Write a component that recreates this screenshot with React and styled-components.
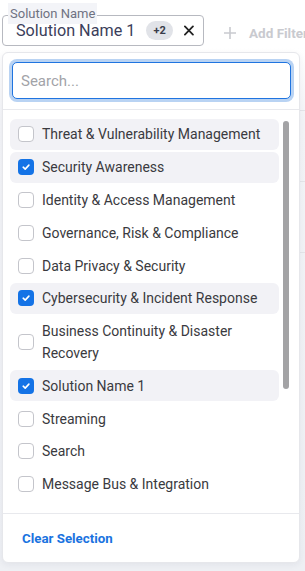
import React from "react";
import styled, { createGlobalStyle } from "styled-components";

const Global = createGlobalStyle`
  html, body { margin: 0; padding: 0; }
  body {
    background: #ffffff;
    font-family: Roboto, "Noto Sans", sans-serif;
    -webkit-font-smoothing: antialiased;
  }
`;

const Page = styled.div`
  position: relative;
  width: 305px;
  height: 571px;
  overflow: hidden;
  background: linear-gradient(180deg, #ffffff 0px, #ffffff 48px, #f3f4f7 120px, #eef0f4 571px);
`;

const FilterBar = styled.div`
  display: flex;
  align-items: center;
  gap: 20px;
  padding: 15px 0 0 2px;
  height: 31px;
`;

const Field = styled.div`
  position: relative;
  flex: none;
  box-sizing: border-box;
  width: 202px;
  height: 31px;
  border: 1px solid #b7b9c0;
  border-radius: 4px;
  background: #ffffff;
  display: flex;
  align-items: center;
  gap: 11px;
  padding: 0 9px 0 13px;
`;

const Legend = styled.span`
  position: absolute;
  left: 5px;
  top: -13px;
  padding: 0 2px;
  background: #f3f4f8;
  color: #6f7282;
  font-size: 13px;
  line-height: 21px;
`;

const FieldValue = styled.span`
  color: #3b3e5b;
  font-size: 16.2px;
  white-space: nowrap;
`;

const Badge = styled.span`
  display: inline-flex;
  align-items: center;
  justify-content: center;
  width: 30px;
  height: 19px;
  border-radius: 10px;
  background: #e1e3e8;
  color: #3a3d4a;
  font-size: 11px;
  font-weight: 700;
`;

const ClearX = styled.svg`
  width: 11px;
  height: 11px;
  margin-left: auto;
`;

const AddFilter = styled.div`
  display: flex;
  align-items: center;
  gap: 13px;
  color: #c9cacf;
  font-size: 13.5px;
  font-weight: 700;
  white-space: nowrap;
  padding-top: 4px;
`;

const Backdrop = styled.div`
  position: absolute;
  left: 300px;
  top: 110px;
  width: 10px;
  display: flex;
  flex-direction: column;
`;

const BgRow = styled.div`
  height: 70px;
  border-top: 1px solid #e4e5e9;
`;

const Dropdown = styled.div`
  position: absolute;
  left: 2px;
  top: 52px;
  width: 298px;
  height: 511px;
  box-sizing: border-box;
  background: #ffffff;
  border: 1px solid #e6e7eb;
  border-radius: 6px;
  box-shadow: 0 2px 6px rgba(30, 35, 60, 0.06);
  display: flex;
  flex-direction: column;
`;

const SearchWrap = styled.div`
  padding: 9px 8px 10px 9px;
  border-bottom: 1px solid #e8e9ed;
`;

const SearchInput = styled.input`
  box-sizing: border-box;
  width: 279px;
  height: 37px;
  border: 1.5px solid #1f74e0;
  border-radius: 5px;
  box-shadow: 0 0 0 3px #b9d3f3;
  padding: 0 8px;
  font-family: Roboto, "Noto Sans", sans-serif;
  font-size: 15px;
  color: #333;
  outline: none;
  caret-color: #222;
  &::placeholder { color: #a2a3a8; }
`;

const ListArea = styled.div`
  position: relative;
  flex: 1;
  min-height: 0;
  overflow: hidden;
  padding: 9px 0 0 7px;
  display: flex;
  flex-direction: column;
  gap: 2px;
`;

const Row = styled.label`
  flex: none;
  box-sizing: border-box;
  width: 269px;
  display: flex;
  align-items: center;
  gap: 8px;
  padding: 4.4px 8px;
  border-radius: 6px;
  background: ${(p) => (p.$hl ? "#f2f2f6" : "transparent")};
`;

const Box = styled.span`
  flex: none;
  box-sizing: border-box;
  width: 16px;
  height: 16px;
  border-radius: 4px;
  border: ${(p) => (p.$on ? "none" : "1px solid #c4c5cb")};
  background: ${(p) => (p.$on ? "#1473e6" : "#ffffff")};
  display: flex;
  align-items: center;
  justify-content: center;
`;

const ItemText = styled.span`
  color: #3a3a40;
  font-size: 14px;
  line-height: 22px;
`;

const Thumb = styled.div`
  position: absolute;
  left: 280px;
  top: 11px;
  width: 6px;
  height: 268px;
  border-radius: 3px;
  background: #a3a3a5;
`;

const Footer = styled.div`
  flex: none;
  border-top: 1px solid #e8e9ed;
  height: 48px;
  display: flex;
  align-items: center;
  padding-left: 19px;
`;

const ClearBtn = styled.span`
  color: #1a73e0;
  font-size: 13.3px;
  font-weight: 700;
`;

const items = [
  ["Threat & Vulnerability Management", false, true],
  ["Security Awareness", true, true],
  ["Identity & Access Management", false, false],
  ["Governance, Risk & Compliance", false, false],
  ["Data Privacy & Security", false, false],
  ["Cybersecurity & Incident Response", true, true],
  ["Business Continuity & Disaster Recovery", false, false],
  ["Solution Name 1", true, true],
  ["Streaming", false, false],
  ["Search", false, false],
  ["Message Bus & Integration", false, false],
];

const Check = () => (
  <svg width="10" height="10" viewBox="0 0 10 10">
    <path d="M2.2 5.2 L4.2 7.1 L7.9 3.1" fill="none" stroke="#fff" strokeWidth="1.6" strokeLinecap="round" strokeLinejoin="round" />
  </svg>
);

export default function App() {
  return (
    <Page>
      <Global />
      <FilterBar>
        <Field>
          <Legend>Solution Name</Legend>
          <FieldValue>Solution Name 1</FieldValue>
          <Badge>+2</Badge>
          <ClearX viewBox="0 0 11 11">
            <path d="M1 1 L10 10 M10 1 L1 10" stroke="#222" strokeWidth="2" strokeLinecap="round" />
          </ClearX>
        </Field>
        <AddFilter>
          <svg width="12" height="12" viewBox="0 0 12 12">
            <path d="M6 0 V12 M0 6 H12" stroke="#c9cacf" strokeWidth="1.6" />
          </svg>
          Add Filter
        </AddFilter>
      </FilterBar>
      <Backdrop>
        <BgRow />
        <BgRow />
        <BgRow />
      </Backdrop>
      <Dropdown>
        <SearchWrap>
          <SearchInput placeholder="Search..." autoFocus />
        </SearchWrap>
        <ListArea>
          {items.map(([t, on, hl]) => (
            <Row key={t} $hl={hl}>
              <Box $on={on}>{on && <Check />}</Box>
              <ItemText>{t}</ItemText>
            </Row>
          ))}
          <Thumb />
        </ListArea>
        <Footer>
          <ClearBtn>Clear Selection</ClearBtn>
        </Footer>
      </Dropdown>
    </Page>
  );
}
